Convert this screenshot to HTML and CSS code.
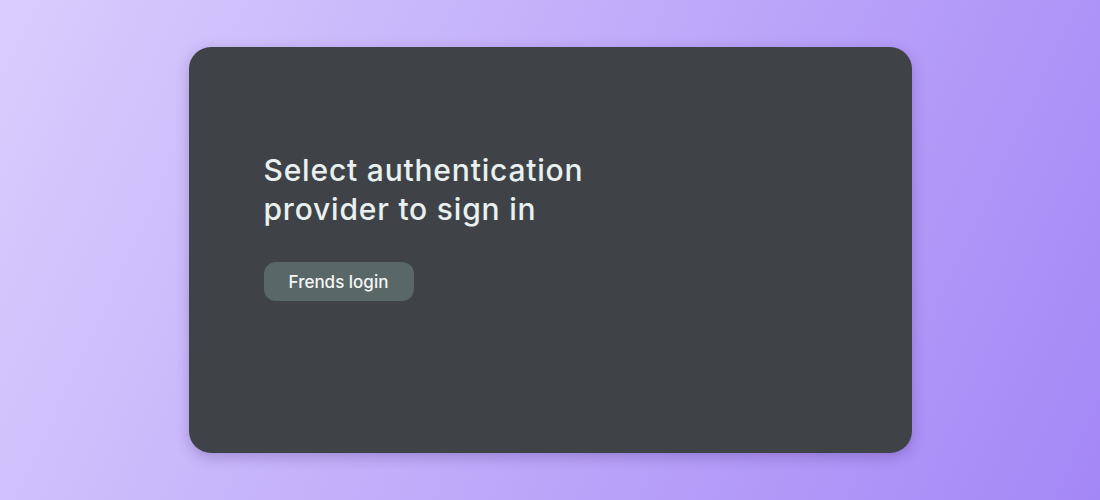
FILE: index.html
```html
<!DOCTYPE html>
<html lang="en">
<head>
    <meta charset="UTF-8">
    <meta name="viewport" content="width=device-width, initial-scale=1.0">
    <title>Sign in</title>
    <link rel="stylesheet" href="styles.css">
</head>
<body>
    <div class="card">
        <h1>Select authentication<br>provider to sign in</h1>
        <button type="button" class="provider">Frends login</button>
    </div>
</body>
</html>
```

FILE: styles.css
```css
html, body {
    height: 100%;
}
body {
    margin: 0;
    font-family: Inter, 'Noto Sans', sans-serif;
    background: linear-gradient(115deg, #d9cdfd 0%, #c2aefa 45%, #a487f6 100%);
    display: flex;
    justify-content: center;
    align-items: flex-start;
}
.card {
    width: 723px;
    height: 406px;
    box-sizing: border-box;
    margin-top: 47px;
    padding: 104px 75px 0;
    background-color: #3f4347;
    border-radius: 22px;
    box-shadow: 0 4px 14px rgba(40, 20, 90, 0.25);
}
h1 {
    margin: 0 0 33px;
    font-size: 30px;
    font-weight: 500;
    line-height: 39px;
    letter-spacing: 0.8px;
    color: #e8f1ef;
}
.provider {
    display: block;
    width: 150px;
    height: 39px;
    background-color: #5a6767;
    color: #f4f7f6;
    border: none;
    border-radius: 12px;
    font-family: inherit;
    font-size: 17px;
    font-weight: 500;
    cursor: pointer;
}
.provider:hover {
    background-color: #647373;
}
```
